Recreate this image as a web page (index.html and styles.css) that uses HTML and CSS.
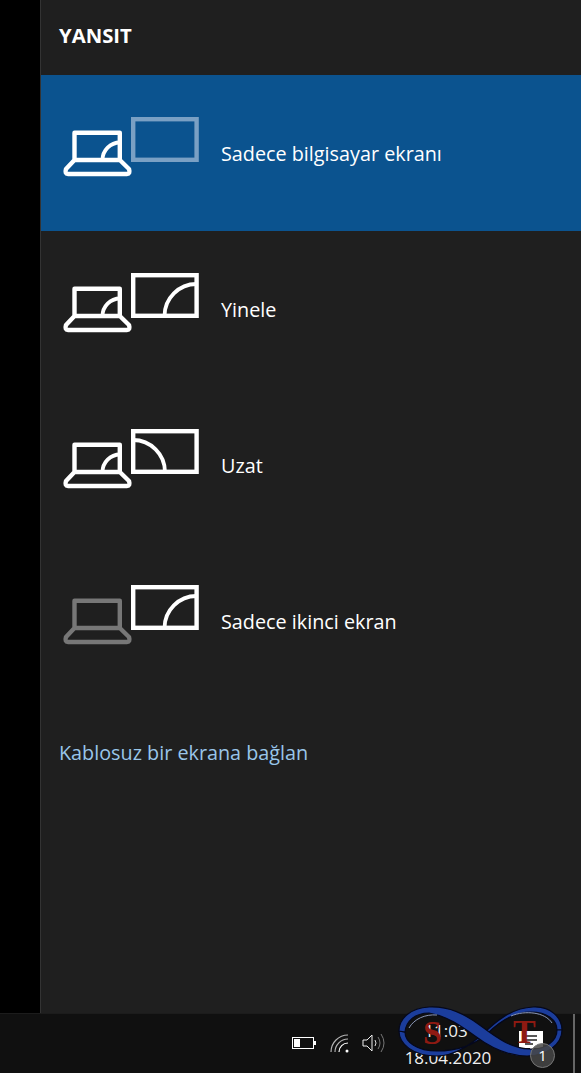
FILE: index.html
```html
<!DOCTYPE html>
<html lang="en">
<head>
    <meta charset="UTF-8">
    <meta name="viewport" content="width=device-width, initial-scale=1.0">
    <title>Yansit</title>
    <link rel="stylesheet" href="styles.css">
</head>
<body>
    <div class="desktop">
        <div class="gutter"></div>
        <div class="panel">
            <h1 class="panel-title">YANSIT</h1>
            <div class="option active">
                <svg class="option-icon" viewBox="0 0 138 60">
                    <rect class="dim-blue" x="71.2" y="2.2" width="63.4" height="40.6"/>
                    <path class="line" d="M12.5 43V15.7H57.8V43M12.5 43H57.8L67 52Q68.5 57 65 57H6Q2.5 57 4 52Z"/>
                    <path class="arc" d="M40.5 43A17.5 17.5 0 0 1 58 25.5"/>
                </svg>
                <span class="option-label">Sadece bilgisayar ekranı</span>
            </div>
            <div class="option">
                <svg class="option-icon" viewBox="0 0 138 60">
                    <rect class="line" x="71.2" y="2.2" width="63.4" height="40.6"/>
                    <path class="arc" d="M102.5 43A32 32 0 0 1 134.5 11"/>
                    <path class="line" d="M12.5 43V15.7H57.8V43M12.5 43H57.8L67 52Q68.5 57 65 57H6Q2.5 57 4 52Z"/>
                    <path class="arc" d="M40.5 43A17.5 17.5 0 0 1 58 25.5"/>
                </svg>
                <span class="option-label">Yinele</span>
            </div>
            <div class="option">
                <svg class="option-icon" viewBox="0 0 138 60">
                    <rect class="line" x="71.2" y="2.2" width="63.4" height="40.6"/>
                    <path class="arc" d="M71 11A32 32 0 0 1 103 43"/>
                    <path class="line" d="M12.5 43V15.7H57.8V43M12.5 43H57.8L67 52Q68.5 57 65 57H6Q2.5 57 4 52Z"/>
                    <path class="arc" d="M40.5 43A17.5 17.5 0 0 1 58 25.5"/>
                </svg>
                <span class="option-label">Uzat</span>
            </div>
            <div class="option">
                <svg class="option-icon" viewBox="0 0 138 60">
                    <rect class="line" x="71.2" y="2.2" width="63.4" height="40.6"/>
                    <path class="arc" d="M102.5 43A32 32 0 0 1 134.5 11"/>
                    <path class="line dim" d="M12.5 43V15.7H57.8V43M12.5 43H57.8L67 52Q68.5 57 65 57H6Q2.5 57 4 52Z"/>
                </svg>
                <span class="option-label">Sadece ikinci ekran</span>
            </div>
            <a class="connect-link" href="#">Kablosuz bir ekrana bağlan</a>
        </div>
    </div>
    <div class="taskbar">
        <div class="tray">
            <svg class="tray-battery" viewBox="0 0 24 14">
                <rect x="0.5" y="1.5" width="21" height="11" fill="none" stroke="#fff"/>
                <rect x="2" y="3" width="6" height="8" fill="#fff"/>
                <rect x="22" y="5" width="2" height="4" fill="#fff"/>
            </svg>
            <svg class="tray-wifi" viewBox="0 0 20 20">
                <path d="M1 19A17 17 0 0 1 18 2M5 19A13 13 0 0 1 18 6" fill="none" stroke="#b5b5b5" stroke-width="1.2"/>
                <path d="M9 19A9 9 0 0 1 18 10" fill="none" stroke="#fff" stroke-width="1.2"/>
                <circle cx="17" cy="18" r="1.5" fill="#fff"/>
            </svg>
            <svg class="tray-volume" viewBox="0 0 24 20">
                <path d="M1 7H5L10 2V18L5 13H1Z" fill="none" stroke="#eee"/>
                <path d="M13 7Q15 10 13 13" fill="none" stroke="#ddd"/>
                <path d="M16 4Q20 10 16 16M19 1Q25 10 19 19" fill="none" stroke="#777"/>
            </svg>
        </div>
        <div class="clock">
            <span class="clock-time">11:03</span>
            <span class="clock-date">18.04.2020</span>
        </div>
        <svg class="notify-icon" viewBox="0 0 24 22">
            <path d="M0 0H24V17H14L11 22V17H0Z" fill="#fff"/>
            <path d="M6 5H18M6 9H18M6 13H14" stroke="#222" stroke-width="1.3"/>
        </svg>
        <svg class="watermark" viewBox="0 0 164 52">
            <path class="loop-blue" d="M0 25C0 38 14 50 38 50C56 50 72 38 84 28C96 16 112 2 134 1C152 0 163 12 163 24L158 24C158 14 148 6 132 6C114 6 100 16 88 28C74 40 56 45 38 45C18 45 6 36 6 26Z"/>
            <path class="loop-blue" d="M30 1C50 0 66 8 82 20C98 32 112 42 130 43C148 44 158 34 158 24L163 24C163 38 148 50 128 50C108 50 92 42 76 30C62 20 48 10 30 7C16 7 7 15 6 26L0 25C0 12 12 2 30 1Z"/>
            <path class="loop-thin" d="M10 22C15 13 26 8 38 9M112 10C126 4 146 6 153 17"/>
            <text class="mark" x="24" y="38">S</text>
            <text class="mark" x="114" y="37">T</text>
        </svg>
        <div class="notify-badge">1</div>
        <div class="show-desktop"></div>
    </div>
</body>
</html>
```
FILE: styles.css
```css
* {
    box-sizing: border-box;
}
html, body {
    margin: 0;
    padding: 0;
}
body {
    width: 581px;
    height: 1073px;
    overflow: hidden;
    background: #000;
    font-family: "Open Sans", sans-serif;
    color: #fff;
}
.desktop {
    display: flex;
    height: 1013px;
}
.gutter {
    width: 40px;
    background: #000;
}
.panel {
    flex: 1;
    background: #1f1f1f;
    border-left: 1px solid #333;
}
.panel-title {
    height: 75px;
    margin: 0;
    padding: 22px 0 0 18px;
    font-size: 20.3px;
    line-height: 26px;
    font-weight: 700;
}
.option {
    display: flex;
    align-items: flex-start;
    height: 156px;
    padding: 42px 0 0 21px;
}
.option.active {
    background: #0b538f;
}
.option-icon {
    flex: none;
    width: 138px;
    height: 60px;
}
.option-label {
    margin: 24px 0 0 21px;
    font-size: 19.8px;
    line-height: 26px;
}
.line, .dim-blue, .arc {
    fill: none;
    stroke: #fff;
    stroke-width: 4.4;
    stroke-linejoin: round;
}
.arc {
    stroke-width: 3.8;
}
.line.dim {
    stroke: #777;
}
.dim-blue {
    stroke: #7aa0c4;
    stroke-linejoin: miter;
}
rect.line {
    stroke-linejoin: miter;
}
.connect-link {
    display: block;
    margin: 41px 0 0 18px;
    font-size: 19.8px;
    line-height: 26px;
    color: #99c6ea;
    text-decoration: none;
}
.taskbar {
    position: relative;
    display: flex;
    height: 60px;
    background: #101010;
    border-top: 1px solid #1c1c1c;
}
.tray {
    display: flex;
    align-items: center;
    gap: 14px;
    height: 58px;
    padding: 0 0 0 292px;
}
.tray-battery {
    width: 24px;
    height: 14px;
}
.tray-wifi {
    width: 20px;
    height: 20px;
}
.tray-volume {
    width: 24px;
    height: 20px;
    margin-left: -2px;
}
.clock {
    display: flex;
    flex-direction: column;
    align-items: center;
    width: 88px;
    margin-left: 18px;
    padding-top: 3px;
    font-size: 17px;
    line-height: 27px;
    color: #f0f0f0;
}
.clock-time {
    margin-right: 4px;
}
.notify-icon {
    position: absolute;
    left: 519px;
    top: 17px;
    width: 24px;
    height: 22px;
}
.notify-badge {
    position: absolute;
    left: 530px;
    top: 29px;
    width: 25px;
    height: 25px;
    border-radius: 50%;
    border: 1px solid #777;
    background: rgba(70, 70, 70, 0.85);
    font-size: 15px;
    line-height: 23px;
    text-align: center;
}
.show-desktop {
    position: absolute;
    left: 573px;
    top: 0;
    width: 2px;
    height: 60px;
    background: #666;
}
.watermark {
    position: absolute;
    left: 399px;
    top: -8px;
    width: 164px;
    height: 52px;
    overflow: visible;
}
.loop-blue {
    fill: #1b3d9c;
    stroke: #05081c;
    stroke-width: 1.2;
}
.loop-thin {
    fill: none;
    stroke: #8a97b8;
    stroke-width: 1;
}
.mark {
    font-family: "Liberation Serif", serif;
    font-weight: 700;
    font-size: 34px;
    fill: #8e1a12;
}
```
